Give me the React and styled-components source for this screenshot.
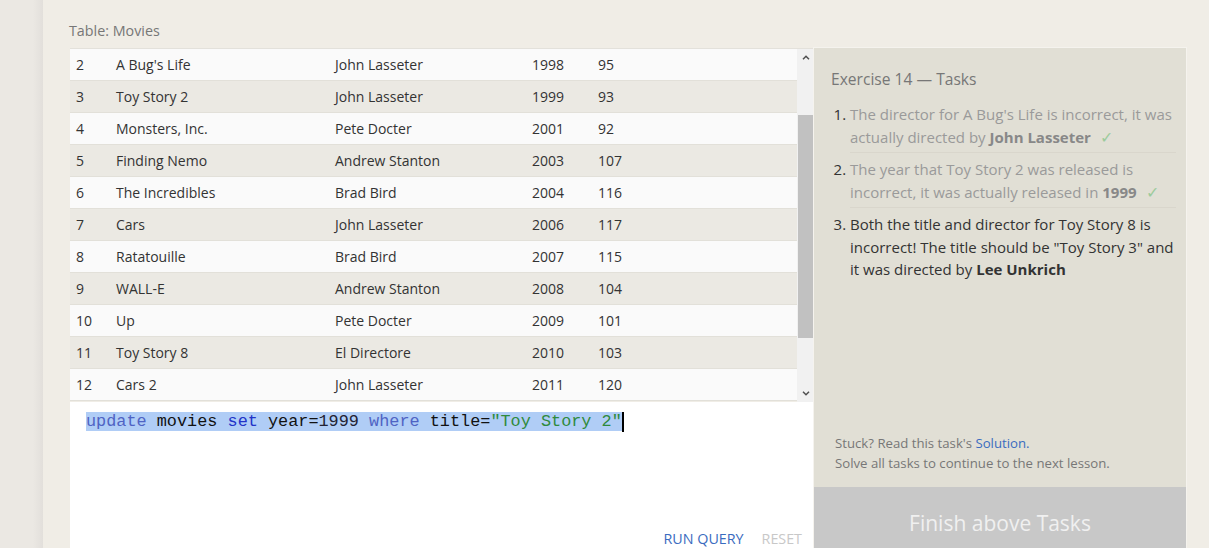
import React from "react";
import styled, { createGlobalStyle } from "styled-components";

const GlobalStyle = createGlobalStyle`
  html, body { margin: 0; padding: 0; }
  body {
    background: #ebe8e3;
    font-family: "Open Sans", "Noto Sans", sans-serif;
    color: #333;
  }
`;

const Page = styled.div`
  display: flex;
  height: 548px;
  overflow: hidden;
`;

const Gutter = styled.div`
  width: 43px;
  flex: none;
  background: linear-gradient(to right, #ebe8e3 0, #ebe8e3 33px, #e2dfdb 43px);
`;

const Main = styled.main`
  flex: 1;
  background: #f0ede6;
  padding: 20px 0 0 27px;
`;

const TableLabel = styled.div`
  font-size: 14.3px;
  line-height: 22px;
  color: #777;
  margin-left: -1px;
  margin-bottom: 6px;
`;

const Workspace = styled.div`
  display: flex;
  width: 1116px;
  height: 511px;
`;

const LeftCol = styled.div`
  width: 744px;
  display: flex;
  flex-direction: column;
`;

const TableBox = styled.div`
  display: flex;
  height: 354px;
  flex: none;
  border-top: 1px solid #e3e1db;
  box-sizing: border-box;
`;

const Rows = styled.div`
  flex: 1;
  overflow: hidden;
`;

const Row = styled.div`
  display: flex;
  height: 31px;
  align-items: center;
  border-bottom: 1px solid #e2e0d9;
  background: ${(p) => (p.$alt ? "#ebe9e3" : "#fafafa")};
  font-size: 14px;
  color: #333;
`;

const Cell = styled.div`
  width: ${(p) => p.$w}px;
  flex: none;
  padding-left: 6px;
  box-sizing: border-box;
  white-space: nowrap;
`;

const Scrollbar = styled.div`
  width: 17px;
  flex: none;
  display: flex;
  flex-direction: column;
  background: #f1f1f1;
`;

const ArrowBtn = styled.div`
  height: 17px;
  display: flex;
  align-items: center;
  justify-content: center;
`;

const Track = styled.div`
  flex: 1;
  padding: 0 1px;
`;

const Thumb = styled.div`
  margin-top: 49px;
  height: 223px;
  background: #c1c1c1;
`;

const Editor = styled.div`
  flex: 1;
  background: #fff;
  display: flex;
  flex-direction: column;
`;

const Code = styled.div`
  height: 126px;
  flex: none;
  padding: 10px 0 0 16px;
  box-sizing: border-box;
  font-family: "Liberation Mono", "Courier New", monospace;
  font-size: 16.85px;
  line-height: 20px;
  color: #111;
  white-space: pre;
`;

const Selection = styled.span`
  background: #b0cdf6;
`;

const Tok = styled.span`
  color: ${(p) => p.$c};
`;

const Caret = styled.span`
  display: inline-block;
  width: 2px;
  height: 20px;
  background: #000;
  vertical-align: top;
`;

const ButtonBar = styled.div`
  display: flex;
  justify-content: flex-end;
  gap: 18px;
  padding-right: 12px;
  height: 20px;
  align-items: center;
`;

const TextButton = styled.span`
  font-size: 14.3px;
  text-transform: uppercase;
  color: ${(p) => (p.$disabled ? "#c8c8c8" : "#3a6cc0")};
`;

const Side = styled.aside`
  width: 372px;
  display: flex;
  flex-direction: column;
  background: #e1dfd5;
  box-shadow: 0 0 0 1px #f5f3ee;
`;

const SideBody = styled.div`
  flex: 1;
  padding: 19px 10px 0 17px;
`;

const SideTitle = styled.div`
  font-size: 15.6px;
  line-height: 24px;
  color: #777;
  margin-bottom: 12px;
`;

const TaskList = styled.ol`
  margin: 0;
  padding-left: 19px;
`;

const Task = styled.li`
  font-size: 15px;
  line-height: 22.5px;
  color: #333;
  padding: 0 0 4px;
  margin-bottom: 5px;
  border-bottom: ${(p) => (p.$last ? "none" : "1px solid #d9d6cc")};
`;

const TaskText = styled.span`
  color: ${(p) => (p.$done ? "#9a9a9a" : "#333")};
  b {
    color: ${(p) => (p.$done ? "#888" : "#333")};
  }
`;

const Check = styled.span`
  color: #9ccb9c;
  font-size: 16px;
  line-height: 1;
  margin-left: 9px;
`;

const Stuck = styled.div`
  padding: 0 0 14px 21px;
  font-size: 13.2px;
  line-height: 20px;
  color: #777;
`;

const Link = styled.span`
  color: #3a6cc0;
`;

const FinishButton = styled.div`
  height: 72px;
  flex: none;
  background: #c8c8c8;
  color: #f0f0f0;
  font-size: 21px;
  display: flex;
  align-items: center;
  justify-content: center;
`;

const rows = [
  [2, "A Bug's Life", "John Lasseter", 1998, 95],
  [3, "Toy Story 2", "John Lasseter", 1999, 93],
  [4, "Monsters, Inc.", "Pete Docter", 2001, 92],
  [5, "Finding Nemo", "Andrew Stanton", 2003, 107],
  [6, "The Incredibles", "Brad Bird", 2004, 116],
  [7, "Cars", "John Lasseter", 2006, 117],
  [8, "Ratatouille", "Brad Bird", 2007, 115],
  [9, "WALL-E", "Andrew Stanton", 2008, 104],
  [10, "Up", "Pete Docter", 2009, 101],
  [11, "Toy Story 8", "El Directore", 2010, 103],
  [12, "Cars 2", "John Lasseter", 2011, 120],
];

const widths = [40, 219, 197, 66, 100];

const Chevron = ({ up }) => (
  <svg width="8" height="5" viewBox="0 0 8 5">
    <path
      d={up ? "M1 4.2 L4 1.2 L7 4.2" : "M1 0.8 L4 3.8 L7 0.8"}
      fill="none"
      stroke="#505050"
      strokeWidth="1.5"
    />
  </svg>
);

export default function App() {
  return (
    <>
      <GlobalStyle />
      <Page>
        <Gutter />
        <Main>
          <TableLabel>Table: Movies</TableLabel>
          <Workspace>
            <LeftCol>
              <TableBox>
                <Rows>
                  {rows.map((r, i) => (
                    <Row key={r[0]} $alt={i % 2 === 1}>
                      {r.map((v, j) => (
                        <Cell key={j} $w={widths[j]}>
                          {v}
                        </Cell>
                      ))}
                    </Row>
                  ))}
                </Rows>
                <Scrollbar>
                  <ArrowBtn>
                    <Chevron up />
                  </ArrowBtn>
                  <Track>
                    <Thumb />
                  </Track>
                  <ArrowBtn>
                    <Chevron />
                  </ArrowBtn>
                </Scrollbar>
              </TableBox>
              <Editor>
                <Code>
                  <Selection>
                    <Tok $c="#4f63c4">update</Tok> movies{" "}
                    <Tok $c="#2233c8">set</Tok> year=<Tok $c="#223">1999</Tok>{" "}
                    <Tok $c="#4f63c4">where</Tok> title=
                    <Tok $c="#2f8a3c">"Toy Story 2"</Tok>
                  </Selection>
                  <Caret />
                </Code>
                <ButtonBar>
                  <TextButton>Run Query</TextButton>
                  <TextButton $disabled>Reset</TextButton>
                </ButtonBar>
              </Editor>
            </LeftCol>
            <Side>
              <SideBody>
                <SideTitle>Exercise 14 — Tasks</SideTitle>
                <TaskList>
                  <Task>
                    <TaskText $done>
                      The director for A Bug's Life is incorrect, it was
                      actually directed by <b>John Lasseter</b>
                    </TaskText>
                    <Check>✓</Check>
                  </Task>
                  <Task>
                    <TaskText $done>
                      The year that Toy Story 2 was released is incorrect, it
                      was actually released in <b>1999</b>
                    </TaskText>
                    <Check>✓</Check>
                  </Task>
                  <Task $last>
                    <TaskText>
                      Both the title and director for Toy Story 8 is incorrect!
                      The title should be "Toy Story 3" and it was directed by{" "}
                      <b>Lee Unkrich</b>
                    </TaskText>
                  </Task>
                </TaskList>
              </SideBody>
              <Stuck>
                Stuck? Read this task's <Link>Solution.</Link>
                <br />
                Solve all tasks to continue to the next lesson.
              </Stuck>
              <FinishButton>Finish above Tasks</FinishButton>
            </Side>
          </Workspace>
        </Main>
      </Page>
    </>
  );
}
